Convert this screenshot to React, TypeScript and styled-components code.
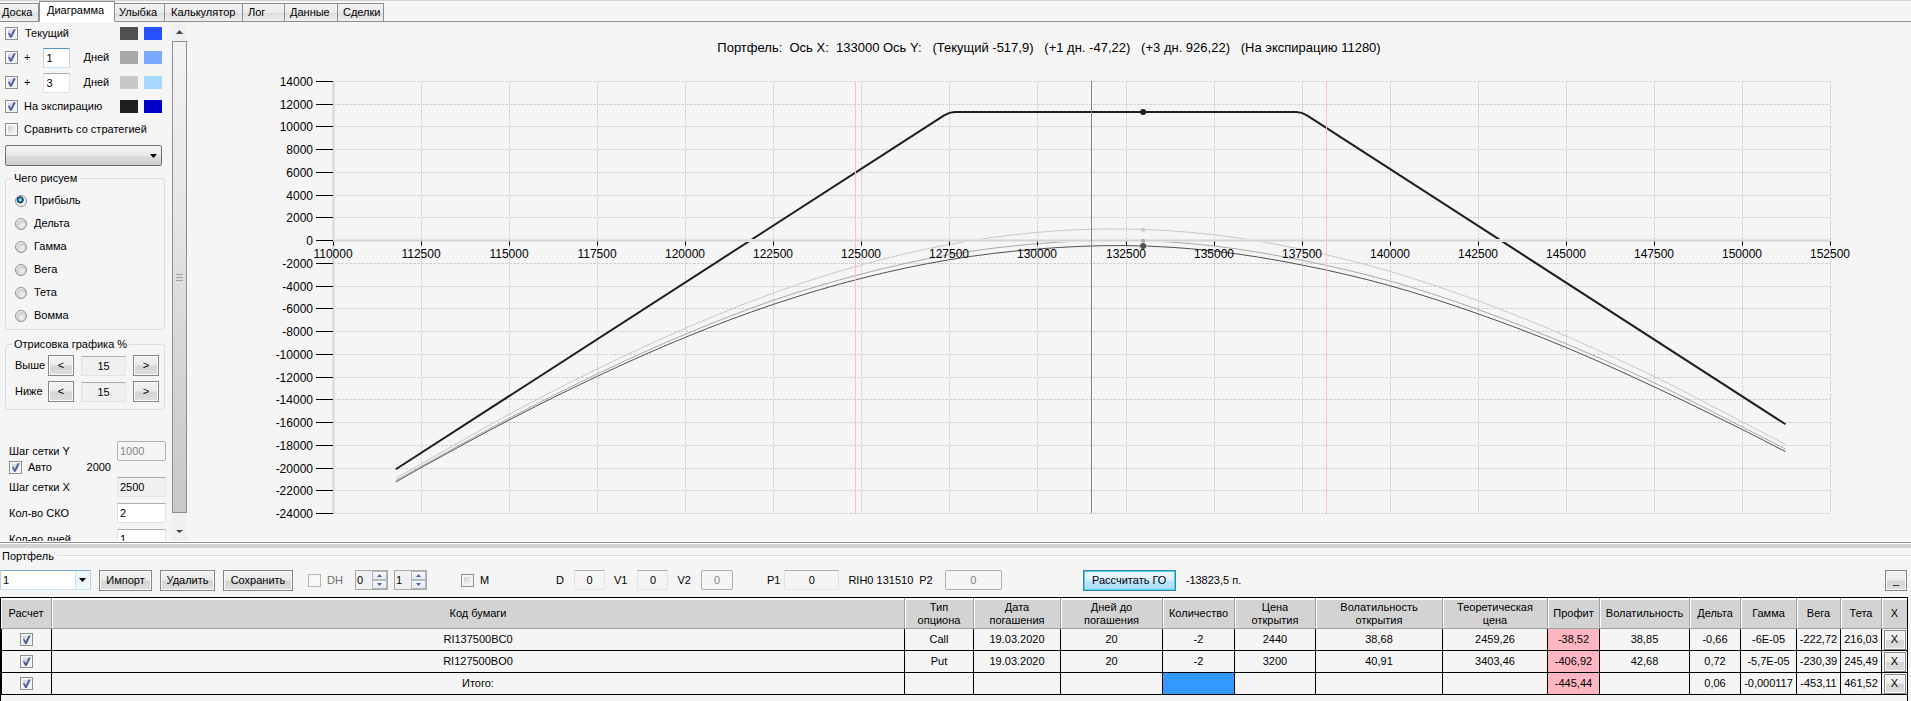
import React, { useId, useLayoutEffect, useRef, useState } from 'react';
import styled, { createGlobalStyle, css } from 'styled-components';

const surface = '#f5f5f5';
const silver = '#d3d3d3';
const frame = '#8c8e94';
const groupLine = '#d5dfe8';

const GlobalStyle = createGlobalStyle`
  *, *::before, *::after { box-sizing: border-box; }
  body { margin: 0; background: ${surface}; }
  body, button, input, select, textarea {
    font: 11px/13px "Liberation Sans", Arial, sans-serif;
    color: #000;
  }
`;

/* ---------- Shell ---------- */

const Window = styled.div`
  display: flex;
  flex-direction: column;
  height: 100vh;
  min-width: 1260px;
  overflow: hidden;
  background: ${surface};
  border-top: 1px solid ${silver};
`;

const TabStrip = styled.nav`
  display: flex;
  align-items: flex-end;
  height: 21px;
  box-shadow: inset 0 -1px ${frame};
`;

const Tab = styled.button<{ $active?: boolean; $width: number; $pad: number }>`
  width: ${(p) => p.$width}px;
  height: ${(p) => (p.$active ? 21 : 19)}px;
  padding: 0 0 ${(p) => (p.$active ? 2 : 0)}px ${(p) => p.$pad}px;
  border: 1px solid ${frame};
  border-left-width: ${(p) => (p.$active ? 1 : 0)}px;
  border-bottom-color: ${(p) => (p.$active ? '#fff' : frame)};
  background: ${(p) => (p.$active ? '#fff' : 'linear-gradient(#f3f3f3, #ebebeb 50%, #dddddd 51%, #eeeeee)')};
  text-align: left;
  white-space: nowrap;
`;

const Workspace = styled.main`
  display: flex;
  flex: 1 1 0;
  min-height: 0;
`;

const Splitter = styled.div`
  flex: none;
  height: 8px;
  border-bottom: 1px solid ${surface};
  background: linear-gradient(#fff 1px, ${frame} 1px 2px, #fff 2px 3px, ${silver} 3px);
`;

/* ---------- Controls ---------- */

const sunken = css`
  border: 1px solid #e2e3ea;
  border-top-color: #abadb3;
  border-radius: 1px;
`;

const raised = css`
  border: 1px solid #858585;
  box-shadow: inset 0 0 0 1px #f8f8f8;
  background: linear-gradient(#f2f2f2, #ebebeb 48%, #d4d4d4 52%, #dedede);
`;

const Button = styled.button<{ $width: number; $accent?: boolean }>`
  flex: none;
  width: ${(p) => p.$width}px;
  height: 21px;
  padding: 0;
  white-space: nowrap;
  ${raised}
  ${(p) =>
    p.$accent &&
    css`
      border-color: #3c7fb1;
      box-shadow: inset 0 0 0 1px #45d0f5;
      background: linear-gradient(#eaf6fd, #d9f0fc 48%, #bee6fd 52%, #a7d9f5);
    `}
`;

const CellButton = styled.button`
  display: block;
  width: 22px;
  height: 20px;
  margin: 0 auto;
  padding: 0;
  ${raised}
`;

const CheckBox = styled.input.attrs({ type: 'checkbox' })`
  appearance: none;
  display: inline-grid;
  place-content: center;
  flex: none;
  width: 13px;
  height: 13px;
  margin: 0;
  border: 1px solid #8e8f8f;
  background: linear-gradient(135deg, #cdd1d8, #f6f6f6) content-box, #f4f4f4;
  padding: 2px;

  &:checked::after {
    content: '';
    width: 9px;
    height: 9px;
    background: #4a5f9c;
    clip-path: polygon(10% 44%, 28% 42%, 42% 66%, 74% 2%, 98% 2%, 52% 98%, 34% 98%);
  }

  &:disabled {
    border-color: #b5b5b5;
    background: #f8f8f8;
  }
`;

const Radio = styled.input.attrs({ type: 'radio' })`
  appearance: none;
  flex: none;
  width: 12px;
  height: 12px;
  margin: 0;
  border: 1px solid #8e8f8f;
  border-radius: 50%;
  background: radial-gradient(circle at 60% 65%, #f4f4f4, #c9cdd2 60%, #f4f4f4 66%);

  &:checked {
    background: radial-gradient(circle at 42% 38%, #8fd8f5 0 1px, #1b78ad 2px, #0b2d4d 3px, #f0f2f4 4px);
  }
`;

const TextBox = styled.input.attrs({ type: 'text' })<{
  $width: number;
  $center?: boolean;
  $focus?: boolean;
  $plain?: boolean;
}>`
  flex: none;
  width: ${(p) => p.$width}px;
  height: 20px;
  padding: 0 2px;
  background: #fff;
  ${sunken}
  text-align: ${(p) => (p.$center ? 'center' : 'left')};
  ${(p) => p.$focus && 'border-color: #5795bf #b7d5ea #c7e2f1;'}
  &:read-only { background: ${(p) => (p.$plain ? surface : '#f0f0f0')}; }
  &:disabled {
    background: ${surface};
    border-color: #afafaf;
    border-radius: 2px;
    color: #838383;
  }
`;

const EmptySelect = styled.select`
  appearance: none;
  width: 157px;
  height: 21px;
  border: 1px solid #707070;
  border-radius: 2px;
  background: linear-gradient(#f2f2f2, #ebebeb 48%, #dddddd 52%, #cfcfcf);
`;

const SelectShell = styled.span<{ $top?: number }>`
  display: inline-grid;
  align-items: center;
  justify-items: end;
  margin-top: ${(p) => p.$top ?? 0}px;
  & > * { grid-area: 1 / 1; }
  & > svg { margin-right: 5px; pointer-events: none; }
`;

const PortfolioSelect = styled.select`
  appearance: none;
  width: 91px;
  height: 20px;
  padding: 0 6px 0 2px;
  ${sunken}
  border-color: #7fa6c4 #b7d5ea #c7e2f1;
  background: linear-gradient(90deg, #fff 74px, #c9e0ee 74px 75px, #edf6fb 75px);
`;

const DropArrow = () => (
  <svg width="7" height="4" viewBox="0 0 7 4" aria-hidden="true">
    <path d="M0 0h7L3.500 4z" fill="#000" />
  </svg>
);

const Spin = styled.div`
  display: flex;
  width: 33px;
  height: 20px;
  border: 1px solid #a5a7ad;
  background: #f0f0f0;
`;

const SpinInput = styled.input.attrs({ type: 'text' })`
  flex: 1;
  min-width: 0;
  padding: 0 0 0 1px;
  border: 0;
  background: transparent;
`;

const SpinButtons = styled.div`
  display: grid;
  grid-template-rows: 1fr 1fr;
  width: 15px;
`;

const SpinButton = styled.button`
  display: grid;
  place-content: center;
  min-height: 0;
  padding: 0;
  border: 1px solid #b4b8bf;
  background: linear-gradient(#fafafa, #e4e7eb);
`;

function Spinner({ label, value }: { label: string; value: string }) {
  return (
    <Spin>
      <SpinInput aria-label={label} defaultValue={value} />
      <SpinButtons>
        <SpinButton aria-label={`${label} больше`}>
          <svg width="5" height="3" viewBox="0 0 5 3"><path d="M0 3h5L2.500 0z" fill="#4a64b4" /></svg>
        </SpinButton>
        <SpinButton aria-label={`${label} меньше`}>
          <svg width="5" height="3" viewBox="0 0 5 3"><path d="M0 0h5L2.500 3z" fill="#4a64b4" /></svg>
        </SpinButton>
      </SpinButtons>
    </Spin>
  );
}

/* ---------- Sidebar ---------- */

const Sidebar = styled.aside`
  display: flex;
  flex: none;
  width: 187px;
  overflow: hidden;
`;

const SidebarBody = styled.div`
  display: flex;
  flex-direction: column;
  align-items: flex-start;
  flex: none;
  width: 172px;
  padding-left: 5px;
  & > * { flex: none; }
`;

const CurveRow = styled.div<{ $tall?: boolean }>`
  display: flex;
  align-items: center;
  width: 157px;
  height: ${(p) => (p.$tall ? 25 : 23)}px;
`;

const CheckLabel = styled.label<{ $gap?: number }>`
  display: flex;
  align-items: center;
  gap: ${(p) => p.$gap ?? 6}px;
  white-space: nowrap;
`;

const DayCount = styled.label`
  display: flex;
  align-items: center;
  flex-direction: row-reverse;
  gap: 13px;
  margin-left: 13px;
`;

const Swatches = styled.div`
  display: flex;
  gap: 6px;
  margin-left: auto;
`;

const Swatch = styled.button<{ $color: string }>`
  width: 18px;
  height: 13px;
  padding: 0;
  border: 0;
  background: ${(p) => p.$color};
`;

const Group = styled.fieldset<{ $top: number; $bottom: number }>`
  width: 160px;
  min-width: 0;
  margin: ${(p) => p.$top}px 0 0;
  padding: 4px 0 ${(p) => p.$bottom}px 9px;
  border: 1px solid ${groupLine};
  border-radius: 3px;
`;

const Legend = styled.legend`
  margin-left: -3px;
  padding: 0 2px;
`;

const RadioRow = styled.label`
  display: flex;
  align-items: center;
  gap: 7px;
  height: 23px;
`;

const RangeRow = styled.div`
  display: flex;
  align-items: center;
  gap: 7px;
  height: 21px;
  & + & { margin-top: 5px; }
`;

const RangeName = styled.span`
  flex: none;
  width: 26px;
`;

const SettingRow = styled.div<{ $top: number }>`
  display: flex;
  align-items: center;
  justify-content: space-between;
  width: 161px;
  margin-top: ${(p) => p.$top}px;
  padding-left: 4px;
`;

const AutoStep = styled.span`
  margin-right: 55px;
`;

const ScrollTrack = styled.div`
  display: flex;
  flex-direction: column;
  align-items: center;
  width: 15px;
  padding-bottom: 1px;
  background: #f0f0f0;
`;

const ScrollArrow = styled.div<{ $size: number }>`
  display: grid;
  place-content: center;
  flex: none;
  height: ${(p) => p.$size}px;
`;

const ScrollThumb = styled.div`
  display: grid;
  place-content: center;
  gap: 2px;
  flex: 1;
  width: 15px;
  border: 1px solid #8f8f8f;
  background: linear-gradient(#f3f3f3, #e4e4e4 40%, #d2d2d2 75%, #c8c8c8);
`;

const Grip = styled.span`
  width: 7px;
  height: 1px;
  background: #a2a2a2;
`;

const measures = ['Прибыль', 'Дельта', 'Гамма', 'Вега', 'Тета', 'Вомма'];

function SwatchPair({ name, colors }: { name: string; colors: string[] }) {
  return (
    <Swatches>
      {colors.map((c) => (
        <Swatch key={c} $color={c} aria-label={`Цвет ${name}`} />
      ))}
    </Swatches>
  );
}

function DayRow({ days, colors, focus }: { days: string; colors: string[]; focus?: boolean }) {
  return (
    <CurveRow $tall>
      <CheckLabel>
        <CheckBox defaultChecked />+
      </CheckLabel>
      <DayCount>
        Дней
        <TextBox $width={27} $focus={focus} defaultValue={days} />
      </DayCount>
      <SwatchPair name={`+${days}`} colors={colors} />
    </CurveRow>
  );
}

function Range({ label }: { label: string }) {
  return (
    <RangeRow>
      <RangeName>{label}</RangeName>
      <Button $width={26}>&lt;</Button>
      <TextBox $width={45} $center readOnly aria-label={label} value="15" />
      <Button $width={26}>&gt;</Button>
    </RangeRow>
  );
}

function Setting({ label, value, top, ...rest }: { label: string; value: string; top: number; disabled?: boolean; readOnly?: boolean }) {
  const id = useId();
  return (
    <SettingRow $top={top}>
      <label htmlFor={id}>{label}</label>
      <TextBox id={id} $width={49} defaultValue={value} {...rest} />
    </SettingRow>
  );
}

function SettingsPanel() {
  return (
    <Sidebar>
      <SidebarBody>
        <CurveRow>
          <CheckLabel $gap={7}>
            <CheckBox defaultChecked />
            Текущий
          </CheckLabel>
          <SwatchPair name="текущий" colors={['#505050', '#2850ff']} />
        </CurveRow>
        <DayRow days="1" colors={['#a9a9a9', '#78a8ff']} focus />
        <DayRow days="3" colors={['#c8c8c8', '#a8daff']} />
        <CurveRow>
          <CheckLabel>
            <CheckBox defaultChecked />
            На экспирацию
          </CheckLabel>
          <SwatchPair name="экспирация" colors={['#1e1e1e', '#0000c8']} />
        </CurveRow>
        <CurveRow>
          <CheckLabel>
            <CheckBox />
            Сравнить со стратегией
          </CheckLabel>
        </CurveRow>
        <SelectShell $top={4}>
          <EmptySelect aria-label="Стратегия" />
          <DropArrow />
        </SelectShell>

        <Group $top={6} $bottom={2}>
          <Legend>Чего рисуем</Legend>
          {measures.map((m, i) => (
            <RadioRow key={m}>
              <Radio name="measure" defaultChecked={i === 0} />
              {m}
            </RadioRow>
          ))}
        </Group>

        <Group $top={8} $bottom={7}>
          <Legend>Отрисовка графика %</Legend>
          <Range label="Выше" />
          <Range label="Ниже" />
        </Group>

        <Setting label="Шаг сетки Y" value="1000" top={31} disabled />
        <SettingRow $top={0}>
          <CheckLabel>
            <CheckBox defaultChecked />
            Авто
          </CheckLabel>
          <AutoStep>2000</AutoStep>
        </SettingRow>
        <Setting label="Шаг сетки X" value="2500" top={3} readOnly />
        <Setting label="Кол-во СКО" value="2" top={6} />
        <Setting label="Кол-во дней" value="1" top={6} />
      </SidebarBody>
      <ScrollTrack aria-hidden="true">
        <ScrollArrow $size={19}>
          <svg width="7" height="4" viewBox="0 0 7 4"><path d="M0 4h7L3.500 0z" fill="#444" /></svg>
        </ScrollArrow>
        <ScrollThumb>
          <Grip />
          <Grip />
          <Grip />
        </ScrollThumb>
        <ScrollArrow $size={27}>
          <svg width="7" height="12" viewBox="0 0 7 12"><path d="M0 9h7L3.500 12z" fill="#444" /></svg>
        </ScrollArrow>
      </ScrollTrack>
    </Sidebar>
  );
}

/* ---------- Chart ---------- */

const ChartPanel = styled.section`
  display: flex;
  flex-direction: column;
  flex: 1;
  min-width: 0;
`;

const ChartTitle = styled.h1`
  flex: none;
  margin: 0;
  padding-top: 18px;
  height: 44px;
  font-size: 13px;
  font-weight: normal;
  line-height: 16px;
  text-align: center;
  white-space: pre;
`;

const Plot = styled.div`
  flex: 1;
  min-height: 0;
  overflow: hidden;
  & > svg { display: block; }
`;

const AxisText = styled.text`
  font-size: 12px;
  fill: #000;
`;

const X_MIN = 110000;
const X_MAX = 152500;
const X_STEP = 2500;
const Y_MIN = -24000;
const Y_MAX = 14000;
const Y_STEP = 2000;
const pad = { left: 146, right: 81, top: 15, bottom: 28 };

const prices = [
  111783, 112500, 115000, 117500, 120000, 122500, 125000, 127500, 130000, 132500, 135000, 137500, 140000, 142500,
  145000, 147500, 150000, 151236,
];

const profiles = [
  {
    color: '#c8c8c8',
    values: [-20950, -19690, -15320, -11330, -7760, -4650, -2180, -370, 690, 980, 480, -810, -2740, -5320, -8430, -11980, -15970, -17960],
  },
  {
    color: '#a9a9a9',
    values: [-21150, -19900, -15670, -11770, -8280, -5290, -2980, -1280, -310, -10, -510, -1770, -3590, -6090, -9110, -12540, -16410, -18370],
  },
  {
    color: '#505050',
    values: [-21270, -20010, -15820, -11980, -8550, -5650, -3360, -1720, -780, -480, -950, -2180, -4000, -6470, -9430, -12890, -16640, -18600],
  },
];

const markers = [
  { value: 11280, radius: 3, color: '#1e1e1e' },
  { value: 926, radius: 2, color: '#c8c8c8' },
  { value: -47, radius: 2, color: '#a9a9a9' },
  { value: -518, radius: 3, color: '#505050' },
];

const steps = (from: number, to: number, by: number) =>
  Array.from({ length: Math.round((to - from) / by) + 1 }, (_, i) => from + i * by);

/** Smooth path through the points, as cubic Hermite segments. */
function smoothPath(points: [number, number][]) {
  const slope = points.map((_, i) => {
    const a = points[Math.max(0, i - 1)];
    const b = points[Math.min(points.length - 1, i + 1)];
    return (b[1] - a[1]) / (b[0] - a[0]);
  });
  return points.reduce((d, [x, y], i) => {
    if (i === 0) return `M${x} ${y}`;
    const [px, py] = points[i - 1];
    const h = (x - px) / 3;
    return `${d}C${px + h} ${py + slope[i - 1] * h} ${x - h} ${y - slope[i] * h} ${x} ${y}`;
  }, '');
}

function ProfitChart() {
  const box = useRef<HTMLDivElement>(null);
  const [size, setSize] = useState({ width: 0, height: 0 });

  useLayoutEffect(() => {
    const el = box.current!;
    const measure = () => setSize({ width: el.clientWidth, height: el.clientHeight });
    measure();
    const observer = new ResizeObserver(measure);
    observer.observe(el);
    return () => observer.disconnect();
  }, []);

  const { width, height } = size;
  const right = width - pad.right;
  const bottom = height - pad.bottom;
  const sx = (v: number) => pad.left + ((v - X_MIN) / (X_MAX - X_MIN)) * (right - pad.left);
  const sy = (v: number) => pad.top + ((Y_MAX - v) / (Y_MAX - Y_MIN)) * (bottom - pad.top);
  const snap = (v: number) => Math.round(v) + 0.5;
  const xs = steps(X_MIN, X_MAX, X_STEP);
  const ys = steps(Y_MIN, Y_MAX, Y_STEP);
  const at = (x: number, y: number) => `${sx(x)} ${sy(y)}`;

  return (
    <ChartPanel>
      <ChartTitle>
        {'Портфель:  Ось X:  133000 Ось Y:   (Текущий -517,9)   (+1 дн. -47,22)   (+3 дн. 926,22)   (На экспирацию 11280)'}
      </ChartTitle>
      <Plot ref={box}>
        {width > 0 && (
          <svg width={width} height={height} role="img" aria-label="Профиль портфеля">
            <g stroke={silver} strokeDasharray="3 1" fill="none">
              {ys.map((v) => <path key={v} d={`M${pad.left} ${snap(sy(v))}H${right}`} />)}
              {xs.map((v) => <path key={v} d={`M${snap(sx(v))} ${pad.top}V${bottom}`} />)}
            </g>
            {profiles.map((p) => (
              <path
                key={p.color}
                d={smoothPath(p.values.map((v, i) => [sx(prices[i]), sy(v)]))}
                fill="none"
                stroke={p.color}
              />
            ))}
            <path
              d={`M${at(111783, -20154)}L${at(127350, 10980)}Q${at(127500, 11280)} ${at(127650, 11280)}L${at(137350, 11280)}Q${at(137500, 11280)} ${at(137650, 10980)}L${at(151236, -16192)}`}
              fill="none"
              stroke="#1e1e1e"
              strokeWidth="2"
            />
            <g stroke="#e4e4e4" strokeWidth="3">
              <path d={`M${pad.left} ${snap(sy(0))}H${right}`} />
              <path d={`M${snap(sx(X_MIN))} ${pad.top}V${bottom}`} />
            </g>
            <g stroke={silver}>
              <path d={`M${pad.left} ${snap(sy(0))}H${right}`} />
              <path d={`M${snap(sx(X_MIN))} ${pad.top}V${bottom}`} />
            </g>
            <path d={`M${snap(sx(131515))} ${pad.top}V${bottom}`} stroke="#808790" />
            {[124815, 138205].map((v) => (
              <path key={v} d={`M${snap(sx(v))} ${pad.top}V${bottom}`} stroke="#ffc0cb" />
            ))}
            {markers.map((m) => (
              <circle key={m.value} cx={sx(133000)} cy={sy(m.value)} r={m.radius} fill={m.color} />
            ))}
            <g stroke="#000">
              {ys.map((v) => <path key={v} d={`M${pad.left - 17} ${snap(sy(v))}h17`} />)}
              {xs.map((v) => <path key={v} d={`M${snap(sx(v))} ${snap(sy(0)) + 1}v4`} />)}
            </g>
            {ys.map((v) => (
              <AxisText key={v} x={pad.left - 20} y={Math.round(sy(v)) + 5} textAnchor="end">{v}</AxisText>
            ))}
            {xs.map((v) => (
              <AxisText key={v} x={Math.round(sx(v))} y={Math.round(sy(0)) + 18} textAnchor="middle">{v}</AxisText>
            ))}
          </svg>
        )}
      </Plot>
    </ChartPanel>
  );
}

/* ---------- Portfolio ---------- */

const PortfolioHeader = styled.div`
  display: flex;
  align-items: center;
  flex: none;
  height: 14px;
  gap: 1px;
  &::before, &::after {
    content: '';
    height: 2px;
    background: linear-gradient(${groupLine} 50%, #fff 50%);
  }
  &::before { width: 1px; }
  &::after { flex: 1; margin-left: 2px; }
`;

const PortfolioTitle = styled.h2`
  margin: 0;
  font-size: 11px;
  font-weight: normal;
  line-height: 13px;
`;

const Toolbar = styled.div`
  display: flex;
  align-items: center;
  flex: none;
  height: 34px;
  padding-right: 4px;
`;

const Cluster = styled.div<{ $before?: number; $gap?: number }>`
  display: flex;
  align-items: center;
  gap: ${(p) => p.$gap ?? 9}px;
  margin-left: ${(p) => p.$before ?? 0}px;
  white-space: nowrap;
`;

const FieldLabel = styled.label<{ $gap?: number }>`
  display: flex;
  align-items: center;
  gap: ${(p) => p.$gap ?? 10}px;
`;

const Muted = styled.span`
  color: #6d6d6d;
`;

const PushRight = styled.div`
  display: flex;
  margin-left: auto;
`;

const GridFrame = styled.div`
  flex: none;
  margin-right: 3px;
  padding-bottom: 6px;
  border: 1px solid #000;
  border-bottom: 0;
`;

const Grid = styled.table`
  width: 100%;
  table-layout: fixed;
  border-collapse: separate;
  border-spacing: 0;
`;

const Column = styled.col<{ $width?: number }>`
  width: ${(p) => (p.$width ? `${p.$width}px` : 'auto')};
`;

const HeadCell = styled.th`
  height: 31px;
  padding: 1px 0 0;
  border-right: 1px solid #a0a0a0;
  border-bottom: 1px solid #a0a0a0;
  background: ${silver};
  box-shadow: inset 1px 2px #fff, inset 0 1px #a0a0a0;
  font-weight: normal;
  white-space: pre-line;
  &:last-child { border-right: 0; }
`;

const Cell = styled.td<{ $tone?: 'loss' | 'selected' }>`
  height: 22px;
  padding: 0;
  border-right: 1px solid #000;
  border-bottom: 1px solid #000;
  background: ${(p) => (p.$tone === 'loss' ? '#ffb6c1' : p.$tone === 'selected' ? '#3399ff' : surface)};
  text-align: center;
  white-space: nowrap;
  &:first-child { border-left: 1px solid #000; }
  &:last-child { border-right: 0; }
  & > input { vertical-align: middle; }
`;

const columns: [string, number?][] = [
  ['Расчет', 51],
  ['Код бумаги'],
  ['Тип\nопциона', 69],
  ['Дата\nпогашения', 87],
  ['Дней до\nпогашения', 102],
  ['Количество', 72],
  ['Цена\nоткрытия', 81],
  ['Волатильность\nоткрытия', 127],
  ['Теоретическая\nцена', 105],
  ['Профит', 52],
  ['Волатильность', 90],
  ['Дельта', 51],
  ['Гамма', 56],
  ['Вега', 44],
  ['Тета', 41],
  ['X', 25],
];

const rows = [
  ['RI137500BC0', 'Call', '19.03.2020', '20', '-2', '2440', '38,68', '2459,26', '-38,52', '38,85', '-0,66', '-6E-05', '-222,72', '216,03'],
  ['RI127500BO0', 'Put', '19.03.2020', '20', '-2', '3200', '40,91', '3403,46', '-406,92', '42,68', '0,72', '-5,7E-05', '-230,39', '245,49'],
  ['Итого:', '', '', '', '', '', '', '', '-445,44', '', '0,06', '-0,000117', '-453,11', '461,52'],
];

const QUANTITY = 4;
const PROFIT = 8;

function PortfolioGrid() {
  return (
    <GridFrame>
      <Grid>
        <colgroup>
          {columns.map(([name, width]) => <Column key={name} $width={width} />)}
        </colgroup>
        <thead>
          <tr>{columns.map(([name]) => <HeadCell key={name} scope="col">{name}</HeadCell>)}</tr>
        </thead>
        <tbody>
          {rows.map((row, r) => (
            <tr key={row[0]}>
              <Cell><CheckBox defaultChecked aria-label={`Расчет ${row[0]}`} /></Cell>
              {row.map((value, c) => (
                <Cell key={c} $tone={c === PROFIT ? 'loss' : c === QUANTITY && r === rows.length - 1 ? 'selected' : undefined}>
                  {value}
                </Cell>
              ))}
              <Cell><CellButton>X</CellButton></Cell>
            </tr>
          ))}
        </tbody>
      </Grid>
    </GridFrame>
  );
}

function PortfolioToolbar() {
  return (
    <Toolbar>
      <Cluster $gap={8}>
        <SelectShell>
          <PortfolioSelect aria-label="Портфель">
            <option>1</option>
          </PortfolioSelect>
          <DropArrow />
        </SelectShell>
        <Button $width={53}>Импорт</Button>
        <Button $width={55}>Удалить</Button>
        <Button $width={70}>Сохранить</Button>
      </Cluster>
      <Cluster $before={15} $gap={12}>
        <CheckLabel>
          <CheckBox disabled />
          <Muted>DH</Muted>
        </CheckLabel>
        <Cluster $gap={6}>
          <Spinner label="От" value="0" />
          <Spinner label="Шаг" value="1" />
        </Cluster>
      </Cluster>
      <Cluster $before={34}>
        <CheckLabel>
          <CheckBox />M
        </CheckLabel>
      </Cluster>
      <Cluster $before={67}>
        <FieldLabel>D<TextBox $width={31} $center $plain readOnly value="0" /></FieldLabel>
        <FieldLabel>V1<TextBox $width={31} $center $plain readOnly value="0" /></FieldLabel>
        <FieldLabel>V2<TextBox $width={32} $center disabled value="0" /></FieldLabel>
      </Cluster>
      <Cluster $before={34}>
        <FieldLabel $gap={4}>P1<TextBox $width={55} $center $plain readOnly value="0" /></FieldLabel>
        <Cluster $gap={6}>
          <span>RIH0 131510</span>
          <FieldLabel $gap={12}>P2<TextBox $width={57} $center disabled value="0" /></FieldLabel>
        </Cluster>
      </Cluster>
      <Cluster $before={81} $gap={10}>
        <Button $width={93} $accent>Рассчитать ГО</Button>
        <span>-13823,5 п.</span>
      </Cluster>
      <PushRight>
        <Button $width={22} aria-label="Свернуть">_</Button>
      </PushRight>
    </Toolbar>
  );
}

/* ---------- App ---------- */

const tabs = [
  { name: 'Доска', width: 39, pad: 2 },
  { name: 'Диаграмма', width: 76, pad: 7, active: true },
  { name: 'Улыбка', width: 50, pad: 4 },
  { name: 'Калькулятор', width: 78, pad: 6 },
  { name: 'Лог', width: 42, pad: 5 },
  { name: 'Данные', width: 53, pad: 5 },
  { name: 'Сделки', width: 46, pad: 5 },
];

export default function App() {
  return (
    <>
      <GlobalStyle />
      <Window>
        <TabStrip>
          {tabs.map((t) => (
            <Tab key={t.name} $width={t.width} $pad={t.pad} $active={t.active}>{t.name}</Tab>
          ))}
        </TabStrip>
        <Workspace>
          <SettingsPanel />
          <ProfitChart />
        </Workspace>
        <Splitter />
        <PortfolioHeader>
          <PortfolioTitle>Портфель</PortfolioTitle>
        </PortfolioHeader>
        <PortfolioToolbar />
        <PortfolioGrid />
      </Window>
    </>
  );
}
